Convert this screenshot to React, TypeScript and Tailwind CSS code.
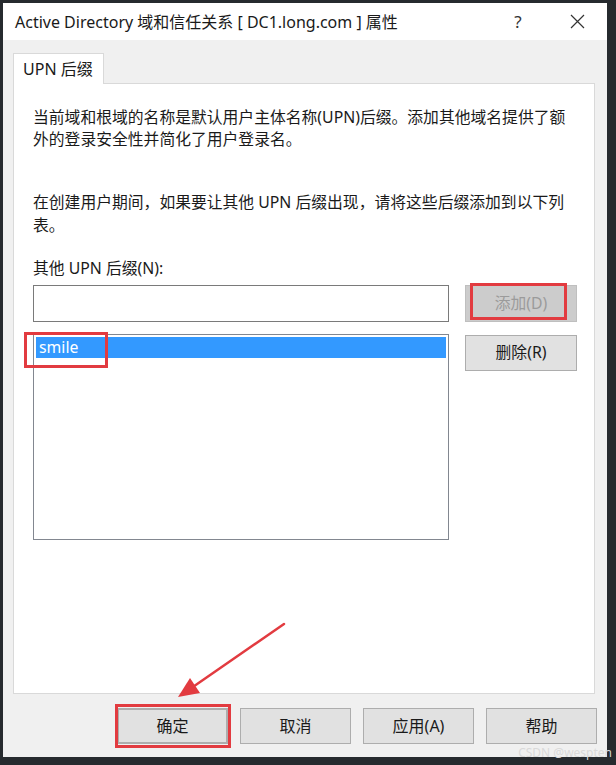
import React from 'react';

const FONT = "[font-family:'Noto_Sans','Noto_Sans_CJK_SC',sans-serif]";

const Btn: React.FC<{ children: React.ReactNode; className?: string }> = ({ children, className = '' }) => (
  <div
    className={`relative h-[36px] w-[111px] flex items-center justify-center border border-[#adadad] bg-[#e1e1e1] text-[16px] text-[#1a1a1a] ${className}`}
  >
    {children}
  </div>
);

const App: React.FC = () => {
  return (
    <div className={`relative w-[616px] h-[765px] bg-[#262a2e] pt-[3px] pl-[3px] pr-[9px] pb-[8px] flex flex-col text-[#1a1a1a] ${FONT}`}>
      {/* title bar */}
      <div className="h-[37px] bg-white flex items-center pl-[12px] text-[16px]">
        <span className="flex-1 whitespace-nowrap">Active Directory 域和信任关系 [ DC1.long.com ] 属性</span>
        <span className="w-[20px] text-center text-[17px] text-[#333]">?</span>
        <span className="w-[20px] ml-[39px] mr-[20px] flex items-center justify-center">
          <svg width="15" height="15" viewBox="0 0 15 15">
            <path d="M1 1 L14 14 M14 1 L1 14" stroke="#333" strokeWidth="1.2" fill="none" />
          </svg>
        </span>
      </div>

      {/* body */}
      <div className="flex-1 bg-[#f0f0f0] pl-[10px] pr-[12px] pt-[13px] flex flex-col">
        <div className="relative z-10 -mb-px w-[91px] h-[31px] border border-b-0 border-[#d9d9d9] bg-white pl-[9px] flex items-center text-[16px]">
          UPN 后缀
        </div>

        <div className="h-[611px] border border-[#d9d9d9] bg-white pl-[19px] pr-[17px] pt-[22px] text-[15.8px]">
          <p className="leading-[22px] whitespace-nowrap">
            当前域和根域的名称是默认用户主体名称(UPN)后缀。添加其他域名提供了额
            <br />
            外的登录安全性并简化了用户登录名。
          </p>
          <p className="mt-[41px] leading-[23px] whitespace-nowrap">
            在创建用户期间，如果要让其他 UPN 后缀出现，请将这些后缀添加到以下列
            <br />
            表。
          </p>
          <div className="mt-[20px] leading-[22px]">其他 UPN 后缀(N):</div>

          <div className="mt-[6px] flex gap-[16px]">
            <div className="w-[416px] flex flex-col">
              <div className="h-[37px] border border-[#7a7a7a] bg-white" />
              <div className="relative mt-[12px] h-[206px] border border-[#828790] bg-white p-[2px]">
                <div className="h-[21px] bg-[#3399ff] pl-[3px] leading-[21px] text-white">smile</div>
                <div className="absolute left-[-10px] top-[-3px] w-[84px] h-[36px] border-[3px] border-[#e23b40]" />
              </div>
            </div>

            <div className="w-[112px] flex flex-col">
              <div className="relative h-[37px] flex items-center justify-center border border-[#bfbfbf] bg-[#cccccc] text-[#9b9b9b]">
                添加(D)
                <div className="absolute left-[4px] top-[-3px] w-[97px] h-[37px] border-[3px] border-[#e23b40]" />
              </div>
              <div className="mt-[13px] h-[36px] flex items-center justify-center border border-[#adadad] bg-[#e1e1e1]">
                删除(R)
              </div>
            </div>
          </div>
        </div>

        {/* bottom buttons */}
        <div className="mt-[14px] mr-[-2px] flex justify-end gap-[12px]">
          <Btn className="border-2 border-[#0078d7]">
            确定
            <div className="absolute left-[-4px] top-[-6px] right-[-5px] bottom-[-6px] border-[3px] border-[#e23b40]" />
          </Btn>
          <Btn>取消</Btn>
          <Btn>应用(A)</Btn>
          <Btn>帮助</Btn>
        </div>
      </div>

      {/* annotation arrow */}
      <svg className="absolute left-0 top-0 pointer-events-none" width="616" height="765" viewBox="0 0 616 765">
        <line x1="284" y1="624" x2="195" y2="685.5" stroke="#e23b40" strokeWidth="2.5" strokeLinecap="round" />
        <polygon points="178,697 200,693 190,678" fill="#e23b40" />
      </svg>

      {/* watermark */}
      <div className="absolute right-[4px] bottom-[5px] text-[12px] leading-[14px] text-[#d9d9d9] whitespace-nowrap">
        CSDN @wespten
      </div>
    </div>
  );
};

export default App;
